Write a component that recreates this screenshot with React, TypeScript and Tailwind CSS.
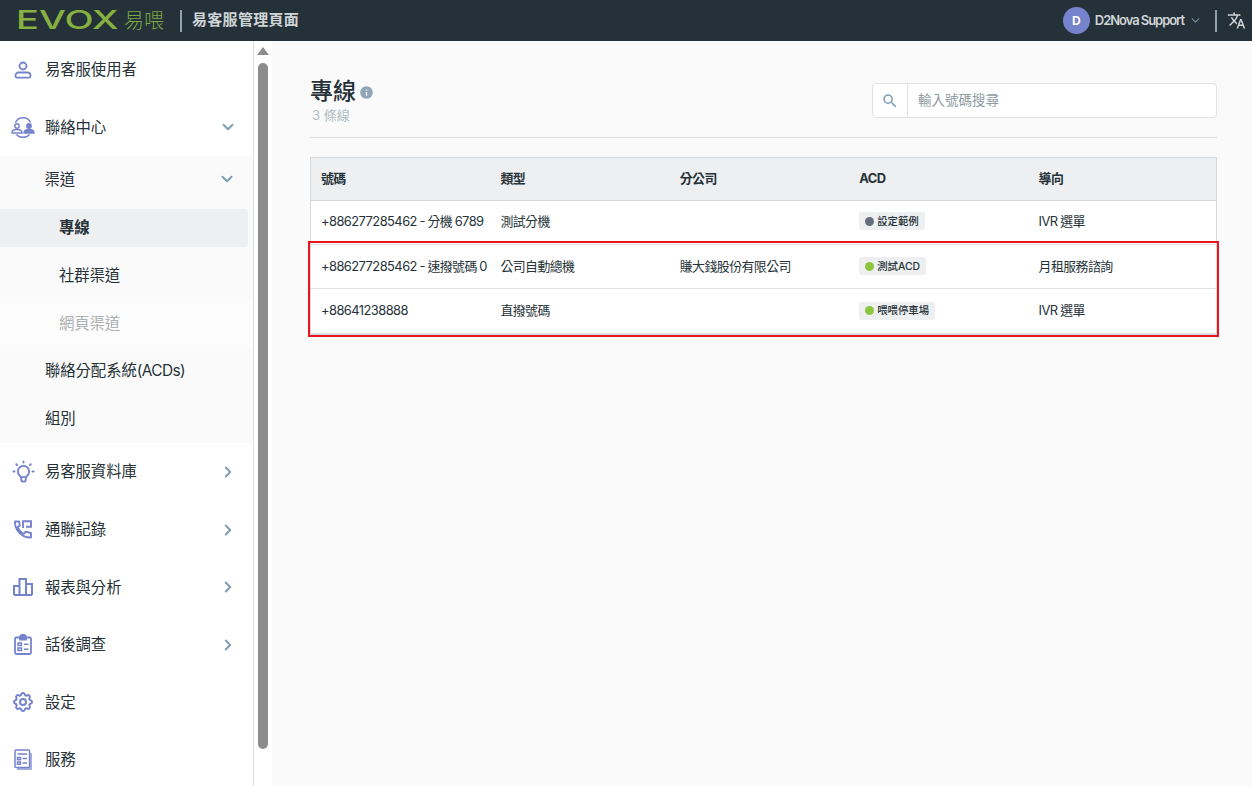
import { ChevronDown, ChevronRight } from "lucide-react";
import { MdInfo, MdSearch, MdTranslate } from "react-icons/md";
import { TbBulb, TbSettings } from "react-icons/tb";

// iconos del menu lateral
const UserIcon = () => (
  <svg width="18" height="18" viewBox="0 0 18 18" fill="none" stroke="#7583cc" strokeWidth="1.8">
    <circle cx="9" cy="5" r="3.500" />
    <path d="M4.500 11.500h9a3 3 0 0 1 3 3v.600a1.500 1.500 0 0 1-1.500 1.500H3a1.500 1.500 0 0 1-1.500-1.500v-.600a3 3 0 0 1 3-3z" />
  </svg>
);

const ContactIcon = () => (
  <svg width="24" height="21" viewBox="0 0 24 21" fill="none" stroke="#7583cc" strokeWidth="1.400">
    <path d="M4.500 5.500C6 2 9 .8 12 .8s6 1.200 7.500 4.700" />
    <path d="M5.500 17.500C7 19.500 9.500 20.300 12 20.300s5-.8 6.500-2.800" />
    <circle cx="6" cy="9" r="2.200" />
    <path d="M1 16c0-2.500 2-3.500 5-3.500s5 1 5 3.500z" />
    <circle cx="18" cy="9" r="2.200" fill="#7583cc" />
    <path d="M13 16c0-2.500 2-3.500 5-3.500s5 1 5 3.500z" fill="#7583cc" />
  </svg>
);

const CallLogIcon = () => (
  <svg width="18" height="19" viewBox="0 0 18 19" fill="none" stroke="#7583cc" strokeWidth="1.900">
    <path d="M1 1.500h4l.8 4-2 1.500c1 3 3.200 5.500 6.200 6.800l1.500-2 5.500 1.200v4.500C8 18 .6 10 1 1.500z" strokeLinejoin="round" />
    <path d="M9 8V1.200h8v5.600h-5" />
  </svg>
);

const ChartIcon = () => (
  <svg width="20" height="18" viewBox="0 0 20 18" fill="none" stroke="#7583cc" strokeWidth="2">
    <path d="M1 17h18M1 17V8h5.500v9M6.500 17V1h6.500v16M13 17V6h6v11" />
  </svg>
);

const SurveyIcon = () => (
  <svg width="18" height="21" viewBox="0 0 18 21" fill="none" stroke="#7583cc" strokeWidth="1.800">
    <path d="M6 3.500H2.500A1.500 1.500 0 0 0 1 5v13.500A1.500 1.500 0 0 0 2.500 20h13a1.500 1.500 0 0 0 1.500-1.500V5a1.500 1.500 0 0 0-1.500-1.500H12" />
    <path d="M6 5.500V3a3 2.200 0 0 1 6 0v2.500z" fill="#7583cc" />
    <rect x="4" y="9" width="3.500" height="2.500" strokeWidth="1.500" />
    <rect x="4" y="14" width="3.500" height="2.500" strokeWidth="1.500" />
    <path d="M10 10.200h4.500M10 15.200h4.500" strokeWidth="1.500" />
  </svg>
);

const ServiceIcon = () => (
  <svg width="18" height="21" viewBox="0 0 18 21" fill="none" stroke="#7583cc" strokeWidth="1.500">
    <rect x="1" y="1" width="14.500" height="17.500" rx="1" />
    <path d="M17 4v16H3" strokeWidth="2" opacity="0.65" />
    <path d="M3.500 5h9.500M8.500 9.500h4.500M8.500 14h4.500" />
    <rect x="3.500" y="8.500" width="3" height="2.200" />
    <rect x="3.500" y="13" width="3" height="2.200" />
  </svg>
);

const menuTop = [{ label: "易客服使用者", icon: <UserIcon /> }];

const menuBottom = [
  { label: "易客服資料庫", icon: <TbBulb size={27} color="#7583cc" strokeWidth={1.700} />, arrow: true },
  { label: "通聯記錄", icon: <CallLogIcon />, arrow: true },
  { label: "報表與分析", icon: <ChartIcon />, arrow: true },
  { label: "話後調查", icon: <SurveyIcon />, arrow: true },
  { label: "設定", icon: <TbSettings size={24} color="#7583cc" strokeWidth={2} />, arrow: false },
  { label: "服務", icon: <ServiceIcon />, arrow: false },
];

const rows = [
  { num: "+886277285462 - 分機 6789", type: "測試分機", branch: "", acd: "設定範例", dot: "bg-[#666e7d]", route: "IVR 選單", row: "h-[44px] pb-[2px]" },
  { num: "+886277285462 - 速撥號碼 0", type: "公司自動總機", branch: "賺大錢股份有限公司", acd: "測試ACD", dot: "bg-[#8cc63f]", route: "月租服務諮詢", row: "h-[44px]" },
  { num: "+88641238888", type: "直撥號碼", branch: "", acd: "喂喂停車場", dot: "bg-[#8cc63f]", route: "IVR 選單", row: "h-[45px]" },
];

const MenuItem = ({ label, icon, arrow }: { label: string; icon: React.ReactNode; arrow?: boolean }) => (
  <div className="flex h-[57.6px] items-center">
    <span className="flex w-[46px] shrink-0 justify-center">{icon}</span>
    <span className="-ml-[1px]">{label}</span>
    {arrow && <ChevronRight size={18} color="#7f9db3" strokeWidth={2.600} className="ml-auto mr-[16px]" />}
  </div>
);

const Cell = ({ children, className = "" }: { children?: React.ReactNode; className?: string }) => (
  <div className={`w-[179.4px] shrink-0 whitespace-nowrap pl-[10px] ${className}`}>{children}</div>
);

export default function App() {
  return (
    <div className="flex h-screen flex-col overflow-hidden bg-[#fafafa] font-['Inter','Noto_Sans_CJK_TC',sans-serif] text-[#263238]">
      {/* barra superior */}
      <header className="flex h-[41px] shrink-0 items-center bg-[#243139]">
        <div className="ml-[16px] w-[102px] origin-left scale-x-[1.520] text-[25px] font-medium leading-none text-[#86b03f]">EVOX</div>
        <div className="ml-[6px] text-[20px] font-light text-[#7da842]">易喂</div>
        <div className="ml-[16px] h-[22px] w-[2px] bg-[#8fa3ad]" />
        <div className="ml-[10px] text-[15px] font-bold tracking-[0.02em] text-[#cfd4d6]">易客服管理頁面</div>
        <div className="ml-auto flex h-[27px] w-[27px] items-center justify-center rounded-full bg-[#7583cc] text-[12px] font-bold text-white">D</div>
        <div className="ml-[5px] text-[13px] font-semibold tracking-[-1.05px] text-[#cfd4d6]">D2Nova Support</div>
        <ChevronDown size={13} color="#7f919b" className="ml-[5px]" />
        <div className="ml-[13px] h-[22px] w-[2px] bg-[#8fa3ad]" />
        <MdTranslate size={19} color="#cfd4d6" className="ml-[10px] mr-[6px]" />
      </header>

      <div className="flex min-h-0 flex-1">
        {/* menu lateral */}
        <aside className="w-[254px] shrink-0 border-r border-[#dcdfe1] bg-white text-[15.400px] tracking-[-0.1px]">
          {menuTop.map((item) => (
            <MenuItem key={item.label} {...item} />
          ))}
          <div className="flex h-[57.6px] items-center">
            <span className="flex w-[46px] shrink-0 justify-center"><ContactIcon /></span>
            <span className="-ml-[1px]">聯絡中心</span>
            <ChevronDown size={18} color="#7f9db3" strokeWidth={2.600} className="ml-auto mr-[16px]" />
          </div>
          <div className="bg-[#fafafa]">
            <div className="flex h-[48px] items-center pb-[2px] pl-[44.5px]">
              <span>渠道</span>
              <ChevronDown size={18} color="#7f9db3" strokeWidth={2.600} className="ml-auto mr-[17px]" />
            </div>
            <div className="flex h-[48px] items-center pr-[5px]">
              <div className="flex h-[38px] w-full items-center rounded-r-[4px] bg-[#eeeff1] pb-[2px] pl-[59px] font-semibold">專線</div>
            </div>
            <div className="flex h-[48px] items-center pb-[2px] pl-[59px]">社群渠道</div>
            <div className="flex h-[48px] items-center bg-[#fcfcfc] pb-[2px] pl-[59px] text-[#aeb1b3]">網頁渠道</div>
            <div className="flex h-[48px] items-center pb-[3px] pl-[45px]">
              <span>聯絡分配系統<span className="tracking-[-0.6px]">(ACDs)</span></span>
            </div>
            <div className="flex h-[47px] items-center pb-[2px] pl-[45px]">組別</div>
          </div>
          {menuBottom.map((item) => (
            <MenuItem key={item.label} {...item} />
          ))}
        </aside>

        {/* barra de scroll */}
        <div className="flex w-[18px] shrink-0 flex-col items-center bg-white pt-[6px]">
          <div className="h-0 w-0 border-x-[6px] border-b-[8px] border-x-transparent border-b-[#8c8c8c]" />
          <div className="mt-[8px] h-[686px] w-[10px] rounded-[5px] bg-[#8c8c8c]" />
        </div>

        {/* contenido */}
        <main className="min-w-0 flex-1 pl-[38px] pr-[35px] pt-[36px]">
          <div className="flex h-[61px] items-start justify-between border-b border-[#dcdfe1]">
            <div>
              <div className="flex items-center">
                <h1 className="text-[23px] font-medium leading-[28px]">專線</h1>
                <MdInfo size={15} color="#8fa5b8" className="ml-[3px] mt-[2px]" />
              </div>
              <div className="pl-[2px] text-[13px] leading-[20px] text-[#b0bec5]">3 條線</div>
            </div>
            <div className="mt-[6px] flex h-[35px] w-[345px] rounded-[4px] border border-[#dfe3e6] bg-white">
              <div className="flex w-[35px] items-center justify-center border-r border-[#dfe3e6]">
                <MdSearch size={18} color="#7f9db3" />
              </div>
              <div className="flex items-center pb-[1px] pl-[10px] text-[13.500px] text-[#8f9aa0]">輸入號碼搜尋</div>
            </div>
          </div>

          <div className="relative mt-[19px] border border-[#d5d9dc] bg-white text-[12.900px] tracking-[-0.55px] [word-spacing:-0.5px]">
            <div className="flex h-[43px] items-center border-b border-[#d5d9dc] bg-[#eeeff1] font-bold">
              <Cell>號碼</Cell>
              <Cell>類型</Cell>
              <Cell>分公司</Cell>
              <Cell>ACD</Cell>
              <Cell>導向</Cell>
            </div>
            {rows.map((r) => (
              <div key={r.num} className={`flex items-center border-b border-[#dfe2e4] ${r.row}`}>
                <Cell>{r.num}</Cell>
                <Cell>{r.type}</Cell>
                <Cell>{r.branch}</Cell>
                <Cell>
                  <span className="inline-flex h-[18px] items-center rounded-[2px] bg-[#eeeff1] pl-[6px] pr-[6px] text-[10.400px] font-medium tracking-normal">
                    <span className={`mr-[3px] h-[9px] w-[9px] shrink-0 rounded-full ${r.dot}`} />
                    {r.acd}
                  </span>
                </Cell>
                <Cell>{r.route}</Cell>
              </div>
            ))}
            {/* marco rojo sobre las dos filas */}
            <div className="pointer-events-none absolute -left-[3px] -right-[3px] top-[83px] h-[96px] border-2 border-[#e8141f]" />
          </div>
        </main>
      </div>
    </div>
  );
}
